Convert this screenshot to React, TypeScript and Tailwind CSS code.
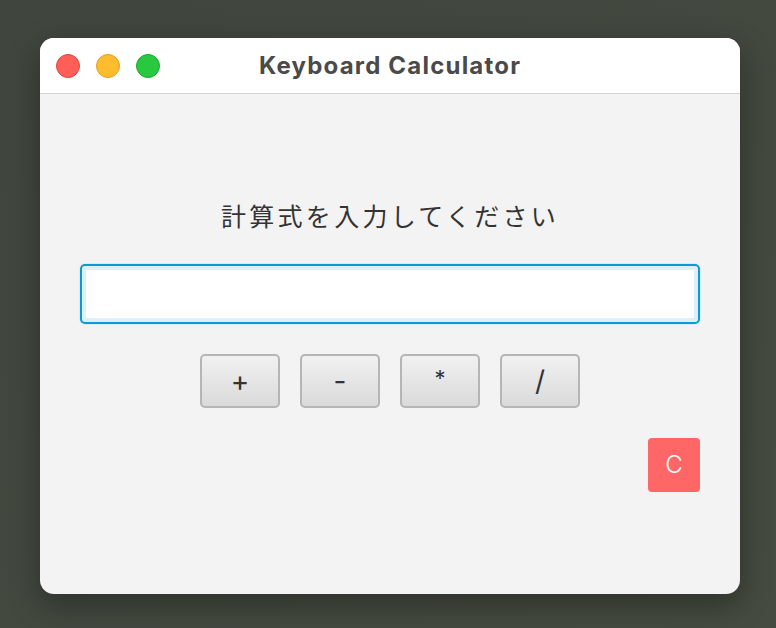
const ops = ["+", "-", "*", "/"];

const TrafficLights = () => (
  <div className="absolute left-[16px] top-0 flex h-full items-center gap-[16px]">
    <span className="h-[24px] w-[24px] rounded-full border border-[#e0443e] bg-[#ff5f57]" />
    <span className="h-[24px] w-[24px] rounded-full border border-[#dea123] bg-[#febc2e]" />
    <span className="h-[24px] w-[24px] rounded-full border border-[#1aab29] bg-[#28c840]" />
  </div>
);

export default function App() {
  return (
    <div className="flex h-[628px] w-[776px] items-start bg-gradient-to-br from-[#40463e] to-[#454b40] pl-[40px] pt-[38px]">
      <div className="flex h-[556px] w-[700px] flex-col overflow-hidden rounded-[14px] bg-[#f3f3f3] shadow-[0_10px_30px_rgba(0,0,0,0.35)]">
        <div className="relative flex h-[56px] shrink-0 items-center justify-center border-b border-[#d4d4d4] bg-white">
          <TrafficLights />
          <span className="font-['Inter',sans-serif] text-[24px] font-bold tracking-[1.2px] text-[#4a4a4a]">
            Keyboard Calculator
          </span>
        </div>

        <div className="flex flex-col items-center px-[40px] pt-[105px] font-['Inter','Noto_Sans_CJK_JP',sans-serif]">
          <p className="h-[32px] font-['Noto_Sans_CJK_JP',sans-serif] text-[25px] leading-[32px] tracking-[3.3px] text-[#333]">
            計算式を入力してください
          </p>

          <input
            type="text"
            className="mt-[33px] h-[60px] w-full rounded-[5px] border-2 border-[#0a9bd3] bg-white px-3 text-[20px] shadow-[inset_0_0_0_4px_#ddeff8,0_0_0_1px_#d8ecf6] outline-none"
          />

          <div className="mt-[30px] flex gap-[20px]">
            {ops.map((op) => (
              <button
                key={op}
                className={
                  op === "*"
                    ? "h-[54px] w-[80px] rounded-[5px] border-2 border-[#b5b5b5] bg-gradient-to-b from-[#f1f1f1] to-[#dadada] pb-[6px] text-[22px] text-[#333]"
                    : "h-[54px] w-[80px] rounded-[5px] border-2 border-[#b5b5b5] bg-gradient-to-b from-[#f1f1f1] to-[#dadada] text-[28px] text-[#333]"
                }
              >
                {op}
              </button>
            ))}
          </div>

          <div className="mt-[30px] flex w-full justify-end">
            <button className="h-[54px] w-[52px] rounded-[4px] bg-[#ff6666] text-[24px] font-light text-white">
              C
            </button>
          </div>
        </div>
      </div>
    </div>
  );
}
